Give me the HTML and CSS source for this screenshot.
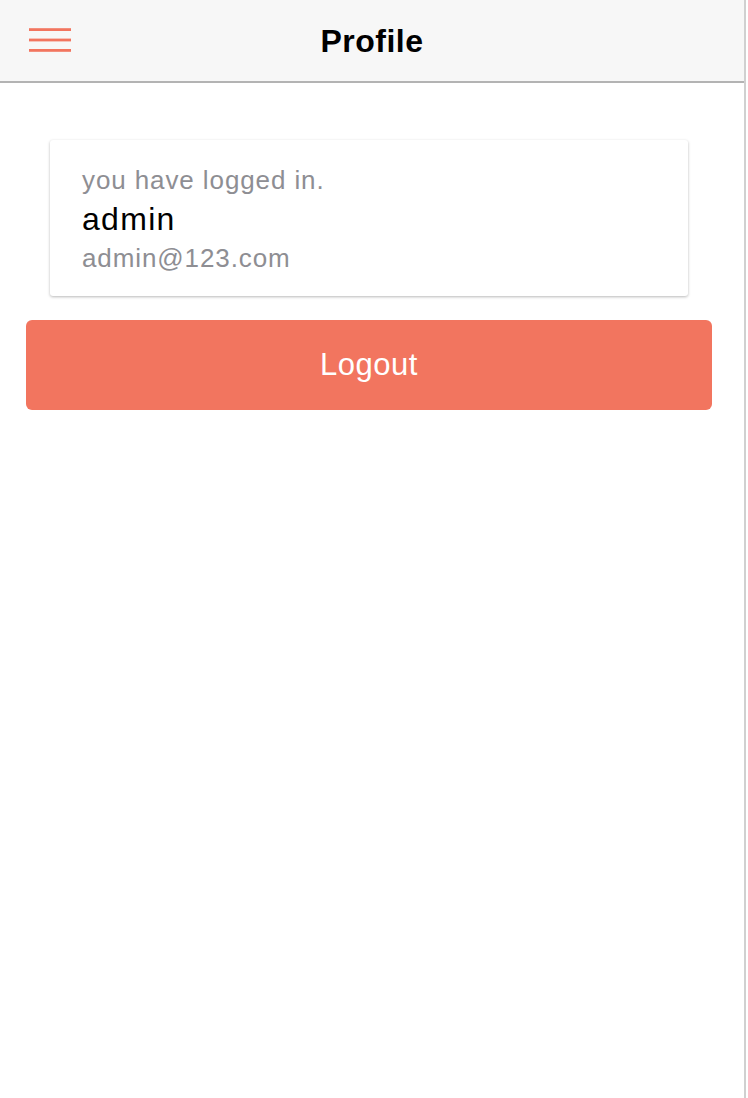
FILE: index.html
```html
<!DOCTYPE html>
<html lang="en">
<head>
<meta charset="utf-8">
<title>Profile</title>
<link rel="stylesheet" href="styles.css">
</head>
<body>
<div class="app">
  <header class="topbar">
    <div class="topbar-left">
      <svg class="menu-icon" width="42" height="24" viewBox="0 0 42 24" aria-hidden="true">
        <rect x="0" y="0.2" width="42" height="2.8" fill="#f2755f"/>
        <rect x="0" y="10.6" width="42" height="2.8" fill="#f2755f"/>
        <rect x="0" y="21" width="42" height="2.8" fill="#f2755f"/>
      </svg>
    </div>
    <h1 class="title">Profile</h1>
    <div class="topbar-right"></div>
  </header>
  <main class="content">
    <section class="card">
      <div class="card-note">you have logged in.</div>
      <div class="card-name">admin</div>
      <div class="card-email">admin@123.com</div>
    </section>
    <button class="logout" type="button">Logout</button>
  </main>
</div>
</body>
</html>
```
FILE: styles.css
```css
html, body {
  margin: 0;
  padding: 0;
  background: #ffffff;
}

body {
  font-family: "Liberation Sans", Arial, sans-serif;
}

.app {
  width: 746px;
  min-height: 1098px;
  border-right: 2px solid #d0d0d0;
  box-sizing: border-box;
}

.topbar {
  height: 83px;
  box-sizing: border-box;
  background: #f7f7f7;
  border-bottom: 2px solid #b3b3b3;
  display: grid;
  grid-template-columns: 1fr auto 1fr;
  align-items: center;
}

.topbar-left {
  padding-left: 29px;
  display: flex;
  align-items: center;
}

.menu-icon {
  display: block;
  margin-bottom: 2px;
}

.title {
  margin: 0;
  font-size: 32px;
  line-height: 34px;
  font-weight: bold;
  letter-spacing: 0.5px;
  color: #000;
}

.content {
  display: flex;
  flex-direction: column;
  padding: 57px 32px 0 26px;
}

.card {
  margin: 0 24px;
  padding: 23px 32px 21px;
  background: #fff;
  border-radius: 3px;
  box-shadow: 0 1px 3px rgba(0, 0, 0, 0.28);
}

.card-note,
.card-email {
  font-size: 26px;
  line-height: 34px;
  letter-spacing: 0.9px;
  color: #8e8e93;
}

.card-name {
  margin-top: 4px;
  font-size: 32px;
  line-height: 36px;
  letter-spacing: 1.3px;
  color: #000;
}

.card-email {
  margin-top: 4px;
}

.logout {
  margin-top: 24px;
  height: 90px;
  border: none;
  border-radius: 6px;
  background: #f2755f;
  color: #fff;
  font-family: "Liberation Sans", Arial, sans-serif;
  font-size: 31px;
  letter-spacing: 0.5px;
  padding: 0;
  display: flex;
  align-items: center;
  justify-content: center;
}
```
